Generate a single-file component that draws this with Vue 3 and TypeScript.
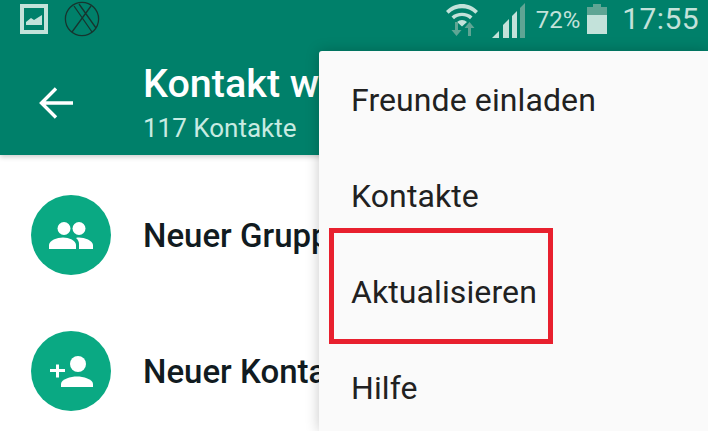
<template>
  <div class="screen">
    <div class="top">
      <div class="status">
        <div class="status-left">
          <svg class="ic-photo" width="28" height="30" viewBox="0 0 28 30">
            <path fill-rule="evenodd" fill="#c3e2da" d="M0 0h28v30H0zM4 4v22h20V4z" />
            <path fill="#c3e2da" d="M6 21v-3l5-4 3 2 8-5v10z" />
          </svg>
          <svg class="ic-x" width="36" height="36" viewBox="0 0 36 36" fill="none" stroke="#16352f" stroke-width="1.3">
            <circle cx="18" cy="18" r="16.6" />
            <path d="M10 5l18 26M15 3l17 24M27 5L8 31" />
          </svg>
        </div>
        <div class="status-right">
          <svg class="ic-wifi" width="32" height="33" viewBox="0 0 32 33">
            <path d="M0 8C9-1.500 23-1.500 32 8l-2.600 2.800C22 3.500 10 3.500 2.600 10.800z" fill="#c3e2da" />
            <path d="M5.500 13.500C11 8.500 21 8.500 26.500 13.500L24 16.300C19.500 12 12.500 12 8 16.300z" fill="#c3e2da" />
            <path d="M11 19c3-2.700 7-2.700 10 0l-5 4.500z" fill="#c3e2da" />
            <path d="M9 33v-8H5.500L10.500 19l5 6H12v8z" transform="matrix(1 0 0 -1 0 52)" fill="#5fa594" />
            <path d="M22 33v-8h-3.500l5-6 5 6H25v8z" fill="#5fa594" />
          </svg>
          <svg class="ic-signal" width="33" height="35" viewBox="0 0 33 35">
            <path d="M0 35l7-7v7z" fill="#c3e2da" />
            <path d="M11 35V22l6-6v19z" fill="#c3e2da" />
            <path d="M20 35V13l5-5v27z" fill="#c3e2da" />
            <path d="M28 35V5l5-5v35z" fill="#5fa594" />
          </svg>
          <span class="battery-text">72%</span>
          <svg class="ic-battery" width="20" height="30" viewBox="0 0 20 30">
            <path d="M6 0h8v3h6v8H0V3h6z" fill="#5fa594" />
            <path d="M0 11h20v19H0z" fill="#c3e2da" />
          </svg>
          <span class="clock">17:55</span>
        </div>
      </div>
      <div class="appbar">
        <svg class="ic-back" width="34" height="32" viewBox="0 0 34 32" fill="none" stroke="#fff" stroke-width="3.400">
          <path d="M34 16H3M17 1.500L2.500 16 17 30.500" />
        </svg>
        <div>
          <div class="title">Kontakt w</div>
          <div class="subtitle">117 Kontakte</div>
        </div>
      </div>
    </div>

    <div class="list">
      <div class="row">
        <div class="avatar">
          <svg width="44" height="27" viewBox="0 0 44 27" fill="#fff">
            <circle cx="15" cy="6.500" r="6.500" />
            <circle cx="30" cy="6.500" r="6.500" />
            <path d="M0 27v-4c0-4.500 8-7.500 14-7.500s13 3 13 7.500v4z" />
            <path d="M30 27v-5c0-2.500-1-4.500-3-6 1-.4 2-.5 3-.5 5.500 0 14 3 14 7.500v4z" />
          </svg>
        </div>
        <span class="row-label">Neuer Grupp</span>
      </div>
      <div class="row">
        <div class="avatar">
          <svg width="43" height="31" viewBox="0 0 43 31" fill="#fff">
            <circle cx="28" cy="8" r="8" />
            <path d="M11 31v-3c0-5 10-7.500 16-7.500S43 23 43 28v3z" />
            <path d="M6 8.500h3V13h6v3H9v5.500H6V16H0v-3h6z" />
          </svg>
        </div>
        <span class="row-label">Neuer Konta</span>
      </div>
    </div>

    <div class="menu">
      <div v-for="item in menuItems" :key="item" class="menu-item">{{ item }}</div>
    </div>
    <div class="highlight"></div>
  </div>
</template>

<script setup lang="ts">
const menuItems: string[] = ["Freunde einladen", "Kontakte", "Aktualisieren", "Hilfe"];
</script>

<style>
html,
body {
  margin: 0;
  background: #fff;
}
</style>

<style scoped>
.screen {
  position: relative;
  width: 708px;
  height: 431px;
  overflow: hidden;
  background: #fff;
  font-family: Roboto, "Liberation Sans", sans-serif;
}

.top {
  height: 155px;
  background: #00806a;
  box-shadow: 0 2px 5px rgba(0, 0, 0, 0.2);
  position: relative;
}

.status {
  height: 51px;
  display: flex;
  justify-content: space-between;
  align-items: flex-start;
}

.status-left {
  display: flex;
  align-items: flex-start;
  padding-left: 20px;
}

.ic-photo {
  margin-top: 4px;
}

.ic-x {
  margin: 1px 0 0 16px;
}

.status-right {
  display: flex;
  align-items: flex-start;
  padding-right: 9px;
}

.ic-wifi {
  margin-top: 3px;
}

.ic-signal {
  margin: 3px 0 0 14px;
}

.battery-text {
  color: #c3e2da;
  font-size: 24px;
  line-height: 28px;
  margin: 6px 0 0 11px;
}

.ic-battery {
  margin: 4px 0 0 7px;
}

.clock {
  color: #c3e2da;
  font-size: 30px;
  line-height: 36px;
  margin: 1px 0 0 15px;
  letter-spacing: 0.4px;
}

.appbar {
  height: 104px;
  display: flex;
  align-items: center;
  padding-left: 39px;
}

.ic-back {
  flex: none;
  margin-right: 70px;
}

.title {
  color: #fff;
  font-size: 39.5px;
  font-weight: 500;
  line-height: 44px;
  white-space: nowrap;
}

.subtitle {
  color: #c8ebe2;
  font-size: 26px;
  line-height: 34px;
  margin-top: 5px;
  white-space: nowrap;
}

.list {
  padding: 40px 0 0 31px;
  display: flex;
  flex-direction: column;
  gap: 56px;
}

.row {
  height: 80px;
  display: flex;
  align-items: center;
  gap: 32px;
  white-space: nowrap;
}

.avatar {
  flex: none;
  width: 80px;
  height: 80px;
  border-radius: 50%;
  background: #0aa983;
  display: flex;
  align-items: center;
  justify-content: center;
}

.row-label {
  color: #111b21;
  font-size: 33px;
  font-weight: 500;
}

.menu {
  position: absolute;
  top: 51px;
  left: 319px;
  right: 0;
  bottom: 0;
  background: #fafafa;
  border-radius: 3px 0 0 0;
  box-shadow: 0 0 14px rgba(0, 0, 0, 0.22);
  padding-top: 1px;
}

.menu-item {
  height: 96px;
  line-height: 96px;
  padding-left: 32px;
  color: #212121;
  font-size: 32px;
  letter-spacing: 0.1px;
}

.highlight {
  position: absolute;
  left: 329px;
  top: 228px;
  width: 224px;
  height: 116px;
  box-sizing: border-box;
  border: 5px solid #e8202e;
}
</style>
